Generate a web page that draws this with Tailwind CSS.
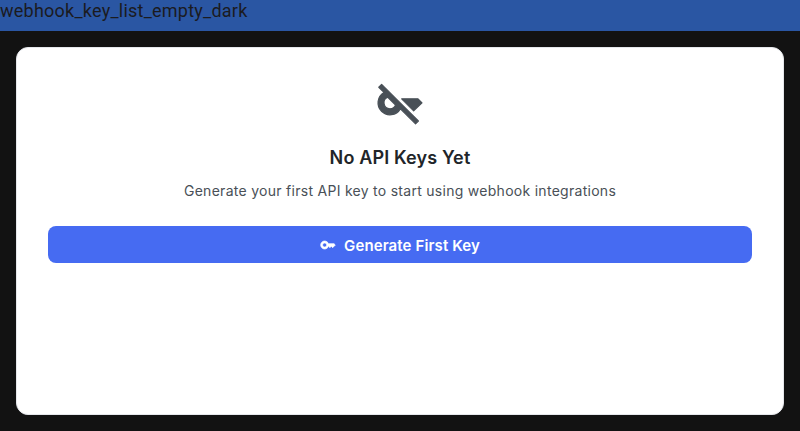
<!DOCTYPE html>
<html lang="en"><head><meta charset="utf-8"><title>webhook_key_list_empty_dark</title>
<script src="https://cdn.jsdelivr.net/npm/@tailwindcss/browser@4"></script></head>
<body class="flex h-screen flex-col overflow-hidden bg-[#121212] font-['Inter',sans-serif]">
<header class="h-[31px] shrink-0 bg-[#2a56a3] font-['Roboto',sans-serif] text-[18px] leading-[22px] tracking-[0.24px] text-[#1b1b1f]">webhook_key_list_empty_dark</header>
<main class="m-4 flex flex-1 flex-col items-center rounded-xl border border-[#e5e7eb] bg-white px-[31px] pt-[31px]">
<svg class="size-12 shrink-0 text-[#495057]" viewBox="0 0 24 24" fill="currentColor" stroke="currentColor" stroke-width="0.6" stroke-linejoin="round"><path d="M21 9.9h-8.17l6 6L23 11.9zM2.81 2.7 1.39 4.12l2.59 2.59A6 6 0 1 0 12.19 14.92l7.59 7.49 1.41-1.41zM7 14.9a3 3 0 0 1-1.1-5.79L9.79 13A3 3 0 0 1 7 14.9z"/></svg>
<h1 class="mt-[17px] text-[18px] leading-[27px] font-semibold tracking-[0.14px] text-[#212529]">No API Keys Yet</h1>
<p class="mt-[9px] text-[14px] leading-[21px] tracking-[0.28px] text-[#495057]">Generate your first API key to start using webhook integrations</p>
<button class="mt-[25px] flex h-[37px] w-full items-center justify-center gap-2 rounded-lg bg-[#466bf2] pt-[3px] text-[15px] font-semibold tracking-[0.12px] text-white"><svg class="size-4 -translate-y-px" viewBox="0 0 24 24" fill="currentColor" stroke="currentColor" stroke-width="1" stroke-linejoin="round"><path d="M21 10h-8.35C11.83 7.67 9.61 6 7 6c-3.31 0-6 2.69-6 6s2.69 6 6 6c2.61 0 4.83-1.67 5.65-4H13l2 2 2-2 2 2 4-4.04zM7 15c-1.65 0-3-1.35-3-3s1.35-3 3-3 3 1.35 3 3-1.35 3-3 3"/></svg><span>Generate First Key</span></button>
</main></body></html>
